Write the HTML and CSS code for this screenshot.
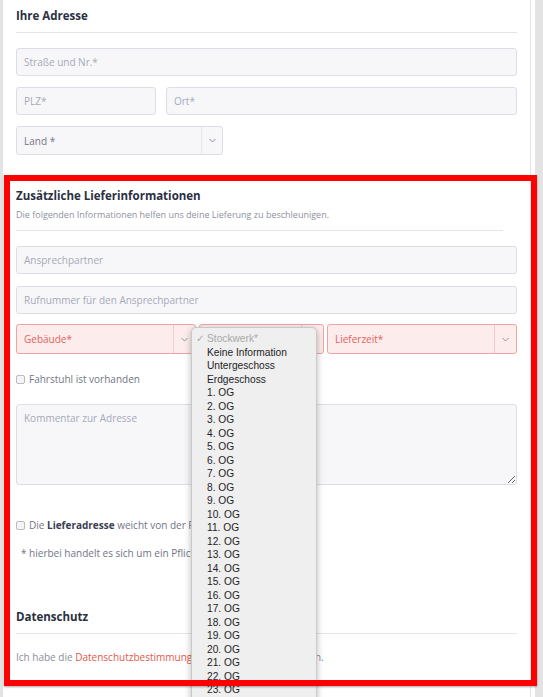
FILE: index.html
```html
<!DOCTYPE html>
<html lang="de">
<head>
<meta charset="utf-8">
<title>Adresse</title>
<link rel="stylesheet" href="styles.css">
</head>
<body>
<div class="page">
  <div class="card">
    <section class="sec sec-address">
      <h2 class="sec-title">Ihre Adresse</h2>
      <div class="rule"></div>
      <div class="fields">
        <input class="field" type="text" placeholder="Straße und Nr.*">
        <div class="row-2">
          <input class="field" type="text" placeholder="PLZ*">
          <input class="field" type="text" placeholder="Ort*">
        </div>
        <div class="select select-land">
          <span class="select-value">Land *</span>
          <span class="select-arrow"><svg width="7" height="5" viewBox="0 0 7 5"><polyline points="0.5,1 3.5,4 6.5,1" fill="none" stroke="#8a8d99" stroke-width="1"/></svg></span>
        </div>
      </div>
    </section>

    <section class="sec sec-delivery">
      <h2 class="sec-title">Zusätzliche Lieferinformationen</h2>
      <p class="sec-desc">Die folgenden Informationen helfen uns deine Lieferung zu beschleunigen.</p>
      <div class="rule rule-short"></div>
      <div class="fields fields-delivery">
        <input class="field" type="text" placeholder="Ansprechpartner">
        <input class="field" type="text" placeholder="Rufnummer für den Ansprechpartner">
        <div class="row-3">
          <div class="select select-error">
            <span class="select-value">Gebäude*</span>
            <span class="select-arrow"><svg width="7" height="5" viewBox="0 0 7 5"><polyline points="0.5,1 3.5,4 6.5,1" fill="none" stroke="#9a8f94" stroke-width="1"/></svg></span>
          </div>
          <div class="select select-error">
            <span class="select-value">Stockwerk*</span>
            <span class="select-arrow"><svg width="7" height="5" viewBox="0 0 7 5"><polyline points="0.5,1 3.5,4 6.5,1" fill="none" stroke="#9a8f94" stroke-width="1"/></svg></span>
          </div>
          <div class="select select-error">
            <span class="select-value">Lieferzeit*</span>
            <span class="select-arrow"><svg width="7" height="5" viewBox="0 0 7 5"><polyline points="0.5,1 3.5,4 6.5,1" fill="none" stroke="#9a8f94" stroke-width="1"/></svg></span>
          </div>
        </div>
      </div>
      <label class="check check-lift"><span class="box"></span>Fahrstuhl ist vorhanden</label>
      <textarea class="comment" placeholder="Kommentar zur Adresse"></textarea>
      <label class="check check-address"><span class="box"></span>Die&nbsp;<b>Lieferadresse</b>&nbsp;weicht von der Rechnungsadresse ab</label>
      <p class="note">* hierbei handelt es sich um ein Pflichtfeld</p>
    </section>

    <section class="sec sec-privacy">
      <h2 class="sec-title">Datenschutz</h2>
      <div class="rule"></div>
      <p class="privacy-text">Ich habe die <a class="link">Datenschutzbestimmungen</a> zur Kenntnis genommen.</p>
    </section>
  </div>
</div>

<ul class="dropdown">
  <li class="opt opt-selected"><span class="tick">✓</span>Stockwerk*</li>
  <li class="opt">Keine Information</li>
  <li class="opt">Untergeschoss</li>
  <li class="opt">Erdgeschoss</li>
  <li class="opt">1. OG</li>
  <li class="opt">2. OG</li>
  <li class="opt">3. OG</li>
  <li class="opt">4. OG</li>
  <li class="opt">5. OG</li>
  <li class="opt">6. OG</li>
  <li class="opt">7. OG</li>
  <li class="opt">8. OG</li>
  <li class="opt">9. OG</li>
  <li class="opt">10. OG</li>
  <li class="opt">11. OG</li>
  <li class="opt">12. OG</li>
  <li class="opt">13. OG</li>
  <li class="opt">14. OG</li>
  <li class="opt">15. OG</li>
  <li class="opt">16. OG</li>
  <li class="opt">17. OG</li>
  <li class="opt">18. OG</li>
  <li class="opt">19. OG</li>
  <li class="opt">20. OG</li>
  <li class="opt">21. OG</li>
  <li class="opt">22. OG</li>
  <li class="opt">23. OG</li>
  <li class="opt">24. OG</li>
</ul>

<div class="highlight"></div>
</body>
</html>
```

FILE: styles.css
```css
html, body {
  margin: 0;
  padding: 0;
}
body {
  width: 543px;
  height: 697px;
  overflow: hidden;
  position: relative;
  background: #e3e3e3;
  font-family: "Open Sans", "Noto Sans", sans-serif;
  color: #6b7080;
}
.page {
  margin-left: 3px;
  width: 532px;
  height: 697px;
  background: #ffffff;
}
.card {
  width: 528px;
  height: 697px;
  border-right: 1px solid #e2e2ea;
  padding-top: 8px;
  box-sizing: border-box;
}
.sec {
  padding: 0 13px 0 13px;
}
.sec-title {
  margin: 0;
  font-size: 11.5px;
  line-height: 16px;
  font-weight: 700;
  color: #2b2f42;
}
.rule {
  height: 1px;
  background: #e3e4ec;
  margin: 8px 0 15px 0;
}
.rule-short {
  margin: 8px 14px 15px 0;
}
.fields {
  display: flex;
  flex-direction: column;
  gap: 11px;
}
.field {
  display: block;
  box-sizing: border-box;
  width: 100%;
  height: 28px;
  margin: 0;
  padding: 0 7px;
  border: 1px solid #dcdde7;
  border-radius: 3px;
  background: #f7f7fa;
  font-family: "Open Sans", "Noto Sans", sans-serif;
  font-size: 10px;
  color: #6b7080;
  outline: none;
}
.field::placeholder {
  color: #a6a9b8;
}
.row-2 {
  display: grid;
  grid-template-columns: 140px 1fr;
  gap: 10px;
}
.select {
  box-sizing: border-box;
  height: 28px;
  display: flex;
  align-items: stretch;
  border: 1px solid #dcdde7;
  border-radius: 3px;
  background: #f7f7fa;
  font-size: 10px;
}
.select-land {
  width: 207px;
  height: 29px;
}
.select-value {
  flex: 1;
  display: flex;
  align-items: center;
  padding-left: 7px;
  color: #717585;
}
.select-arrow {
  width: 20px;
  display: flex;
  align-items: center;
  justify-content: center;
  border-left: 1px solid #e4e5ed;
}
.sec-delivery {
  margin-top: 33px;
}
.sec-desc {
  margin: 4px 0 0 0;
  font-size: 9px;
  line-height: 13px;
  color: #8d91a0;
}
.sec-delivery .rule-short {
  margin-top: 9px;
}
.fields-delivery {
  gap: 12px;
}
.row-3 {
  display: grid;
  grid-template-columns: 180px 125px 1fr;
  column-gap: 3px;
  margin-top: -2px;
}
.select-error {
  height: 30px;
  border-color: #efa4a4;
  background: #fcecec;
}
.select-error .select-value {
  color: #e4625c;
}
.select-error .select-arrow {
  width: 21px;
  border-left-color: #f4c9c9;
}
.check {
  display: flex;
  align-items: center;
  font-size: 10px;
  line-height: 14px;
  color: #717585;
}
.check b {
  color: #3a3f53;
  font-weight: 700;
}
.box {
  width: 7px;
  height: 7px;
  border: 1px solid #b9bac2;
  border-radius: 2px;
  background: #f4f4f6;
  margin-right: 4px;
  flex: none;
}
.check-lift {
  margin-top: 18px;
}
.comment {
  display: block;
  box-sizing: border-box;
  width: 100%;
  height: 81px;
  margin: 18px 0 0 0;
  padding: 6px 7px;
  border: 1px solid #dcdde7;
  border-radius: 3px;
  background: #f7f7fa;
  font-family: "Open Sans", "Noto Sans", sans-serif;
  font-size: 10px;
  line-height: 14px;
  color: #6b7080;
  outline: none;
}
.comment::placeholder {
  color: #a6a9b8;
}
.check-address {
  margin-top: 33px;
}
.note {
  margin: 14px 0 0 0;
  padding-left: 5px;
  font-size: 10px;
  line-height: 14px;
  color: #717585;
}
.sec-privacy {
  margin-top: 49px;
}
.sec-privacy .rule {
  margin-bottom: 16px;
}
.privacy-text {
  margin: 0;
  font-size: 10px;
  line-height: 14px;
  color: #8a8e9c;
}
.link {
  color: #e4584a;
  text-decoration: none;
}

/* native select popup */
.dropdown {
  position: absolute;
  left: 191px;
  top: 327px;
  width: 126px;
  height: 400px;
  margin: 0;
  padding: 4px 0 0 0;
  list-style: none;
  box-sizing: border-box;
  background: #efefef;
  border: 1px solid #c9c9c9;
  border-radius: 5px;
  box-shadow: 0 2px 7px rgba(0, 0, 0, 0.28);
  font-family: "Liberation Sans", Arial, sans-serif;
  font-size: 10.2px;
  color: #1e1e1e;
}
.opt {
  position: relative;
  height: 13.5px;
  line-height: 13.5px;
  padding-left: 15px;
  white-space: nowrap;
}
.opt-selected {
  color: #a9a9a9;
}
.tick {
  position: absolute;
  left: 4px;
  top: 0;
  color: #a9a9a9;
}

/* annotation frame */
.highlight {
  position: absolute;
  left: 4px;
  top: 175px;
  width: 533px;
  height: 511px;
  box-sizing: border-box;
  border: 6px solid #ff0000;
  box-shadow: 0 1px 2px rgba(0, 0, 0, 0.35);
  pointer-events: none;
}
```
